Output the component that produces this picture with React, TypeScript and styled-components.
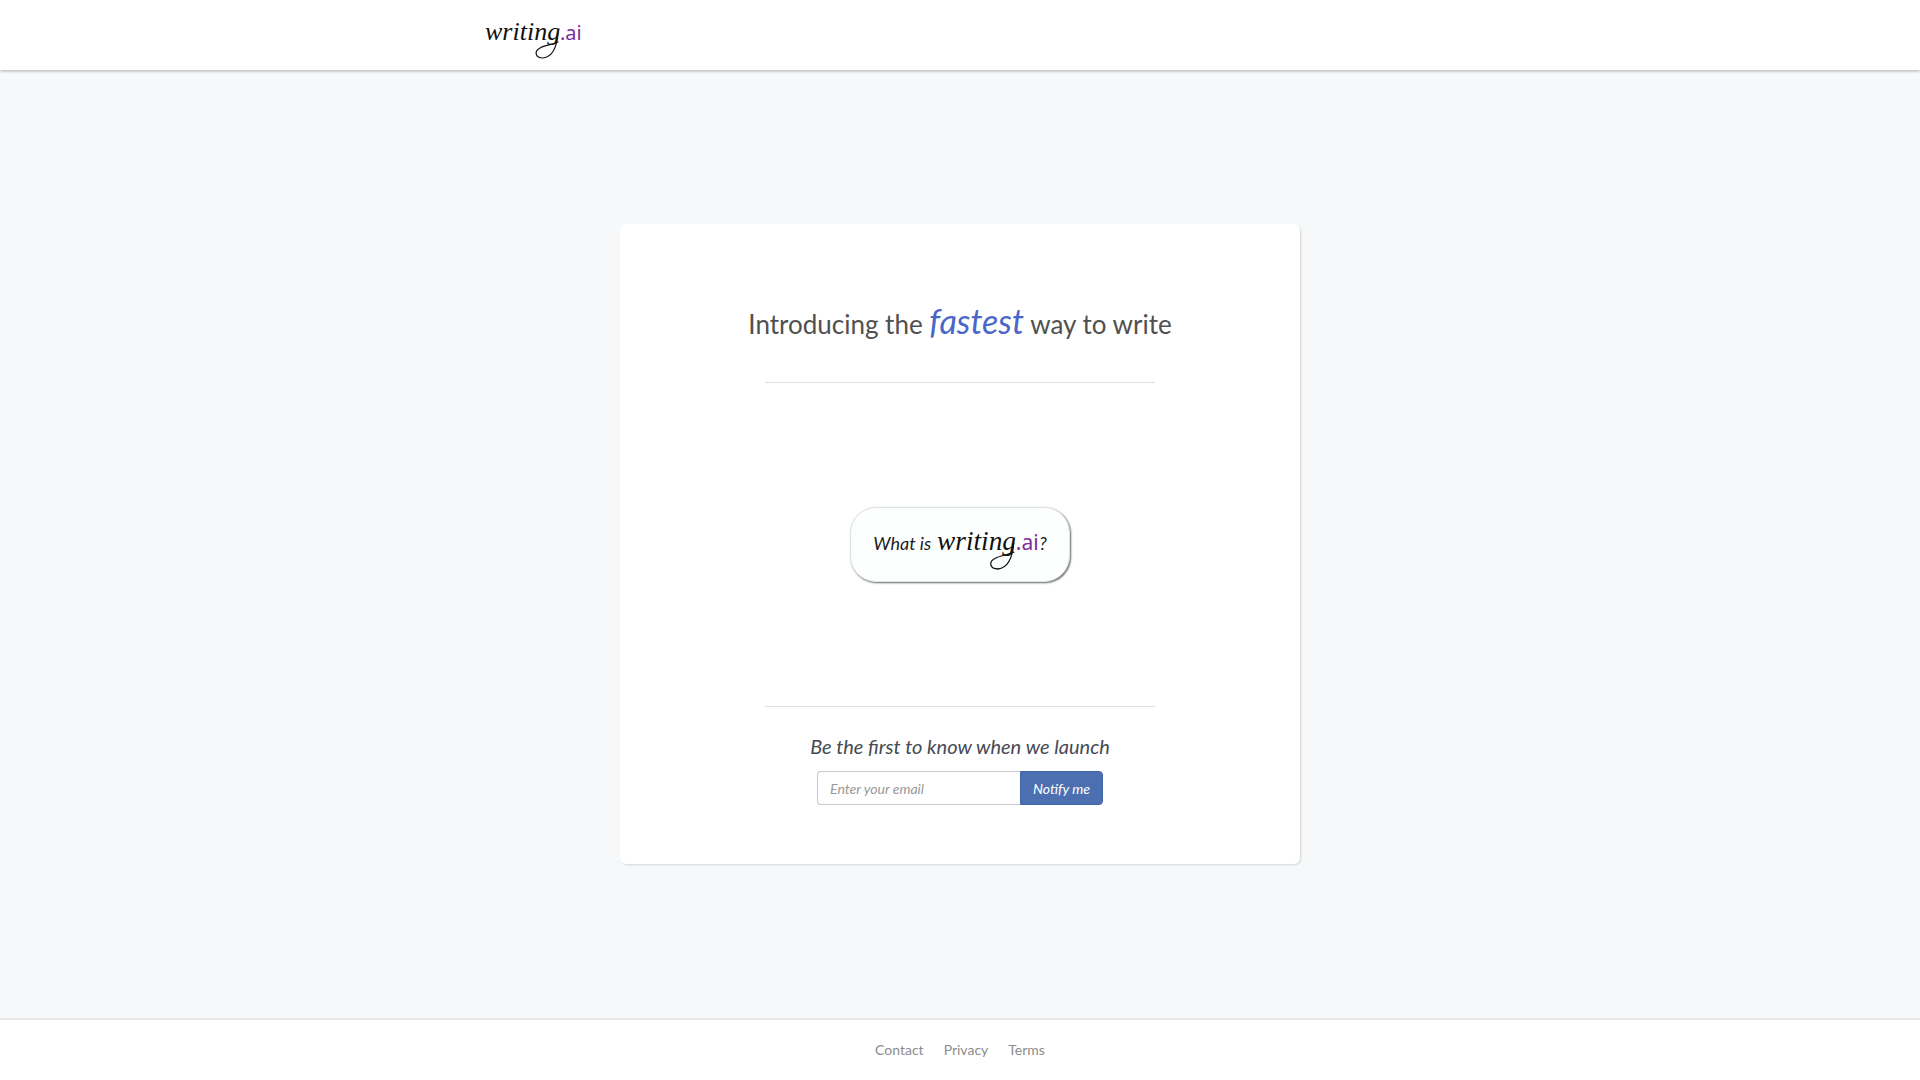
import React from "react";
import styled, { createGlobalStyle } from "styled-components";

const GlobalStyle = createGlobalStyle`
  *, *::before, *::after { box-sizing: border-box; }
  body {
    margin: 0;
    background: #f6f8fa;
    color: #4a4a4a;
    font-family: Lato, "Liberation Sans", sans-serif;
    font-size: 14px;
  }
`;

const Page = styled.div`
  display: flex;
  flex-direction: column;
  min-height: 100vh;
`;

const Header = styled.header`
  background: #fff;
  box-shadow: 0 1px 3px rgba(0, 0, 0, 0.3);
`;

const HeaderInner = styled.div`
  display: flex;
  align-items: center;
  max-width: 950px;
  height: 70px;
  margin: 0 auto;
`;

const HomeLink = styled.a`
  display: flex;
`;

const LogoSvg = styled.svg<{ $width: number }>`
  display: block;
  width: ${(p) => p.$width}px;
  height: auto;
  overflow: visible;
`;

const Script = styled.text`
  fill: #111;
  font-family: "Liberation Serif", "Times New Roman", serif;
  font-style: italic;
  font-size: 26px;
`;

const Suffix = styled.text`
  fill: #7b2d9b;
  font-family: "Noto Sans", "Open Sans", sans-serif;
  font-style: normal;
  font-size: 20px;
`;

const Main = styled.main`
  display: flex;
  flex: 1;
  align-items: center;
  justify-content: center;
  padding: 24px;
`;

const Card = styled.section`
  display: flex;
  flex-direction: column;
  align-items: center;
  width: 100%;
  max-width: 680px;
  padding: 72px 24px 59px;
  border-radius: 6px;
  background: #fff;
  box-shadow: 1px 1px 2px rgba(0, 0, 0, 0.14);
`;

const Heading = styled.h1`
  margin: 0 0 33px;
  color: #505050;
  font-size: 26px;
  font-weight: 400;
  line-height: 50px;
  text-align: center;
`;

const Fastest = styled.em`
  color: #4a66c8;
  font-size: 34px;
`;

const Divider = styled.hr`
  width: 100%;
  max-width: 390px;
  margin: 0;
  border: 0;
  border-top: 1px solid #dcdee0;
`;

const Intro = styled.div`
  padding: 124px 0;
`;

const IntroButton = styled.button`
  display: flex;
  align-items: center;
  height: 75px;
  padding: 0 22px;
  border: 1px solid #dfe5e5;
  border-radius: 26px;
  background: #fdfffe;
  box-shadow: 1px 1px 2px rgba(0, 0, 0, 0.6);
  color: #222;
  font: italic 18px Lato, sans-serif;
  cursor: pointer;
`;

const Phrase = styled.span`
  padding-bottom: 4px;

  &:first-child {
    margin-right: 6px;
  }
`;

const LaunchForm = styled.form`
  display: flex;
  flex-direction: column;
  align-items: center;
  margin-top: 27px;
`;

const LaunchLabel = styled.label`
  margin-bottom: 13px;
  color: #454a54;
  font-size: 20px;
  font-style: italic;
  line-height: 24px;
`;

const Fields = styled.div`
  display: flex;
  height: 34px;
`;

const EmailInput = styled.input`
  width: 203px;
  padding: 0 12px;
  border: 1px solid #c8cccf;
  border-right: 0;
  border-radius: 4px 0 0 4px;
  background: #fff;
  color: #444;
  font: italic 14px Lato, sans-serif;

  &::placeholder {
    color: #999;
    opacity: 1;
  }
`;

const NotifyButton = styled.button`
  padding: 0 12px;
  border: 1px solid #4265a3;
  border-radius: 0 4px 4px 0;
  background: #4c6fb1;
  color: #fff;
  font: italic 14px Lato, sans-serif;
  cursor: pointer;
`;

const Footer = styled.footer`
  border-top: 2px solid #e6e8ea;
  background: #fff;
`;

const FooterNav = styled.nav`
  display: flex;
  align-items: flex-start;
  justify-content: center;
  gap: 20px;
  height: 60px;
  padding-top: 21px;
  line-height: 18px;
`;

const FooterLink = styled.a`
  color: #8c8c8c;
  text-decoration: none;
`;

function Logo({ width }: { width: number }) {
  return (
    <LogoSvg $width={width} viewBox="0 0 97 32" role="img" aria-label="writing.ai">
      <Script x="0" y="21">writing</Script>
      <Suffix x="75" y="21">.ai</Suffix>
      <path
        d="M73 14 C72 26 68 38 58 39 C50 39 49 32 55 29 C60 26 67 26 73 23"
        fill="none"
        stroke="#111"
        strokeWidth="1.2"
        strokeLinecap="round"
      />
    </LogoSvg>
  );
}

export default function App() {
  return (
    <Page>
      <GlobalStyle />
      <Header>
        <HeaderInner>
          <HomeLink href="#">
            <Logo width={97} />
          </HomeLink>
        </HeaderInner>
      </Header>
      <Main>
        <Card>
          <Heading>
            Introducing the <Fastest>fastest</Fastest> way to write
          </Heading>
          <Divider />
          <Intro>
            <IntroButton type="button">
              <Phrase>What is</Phrase>
              <Logo width={102} />
              <Phrase>?</Phrase>
            </IntroButton>
          </Intro>
          <Divider />
          <LaunchForm onSubmit={(e) => e.preventDefault()}>
            <LaunchLabel htmlFor="email">Be the first to know when we launch</LaunchLabel>
            <Fields>
              <EmailInput id="email" type="email" placeholder="Enter your email" />
              <NotifyButton type="submit">Notify me</NotifyButton>
            </Fields>
          </LaunchForm>
        </Card>
      </Main>
      <Footer>
        <FooterNav>
          <FooterLink href="#contact">Contact</FooterLink>
          <FooterLink href="#privacy">Privacy</FooterLink>
          <FooterLink href="#terms">Terms</FooterLink>
        </FooterNav>
      </Footer>
    </Page>
  );
}
